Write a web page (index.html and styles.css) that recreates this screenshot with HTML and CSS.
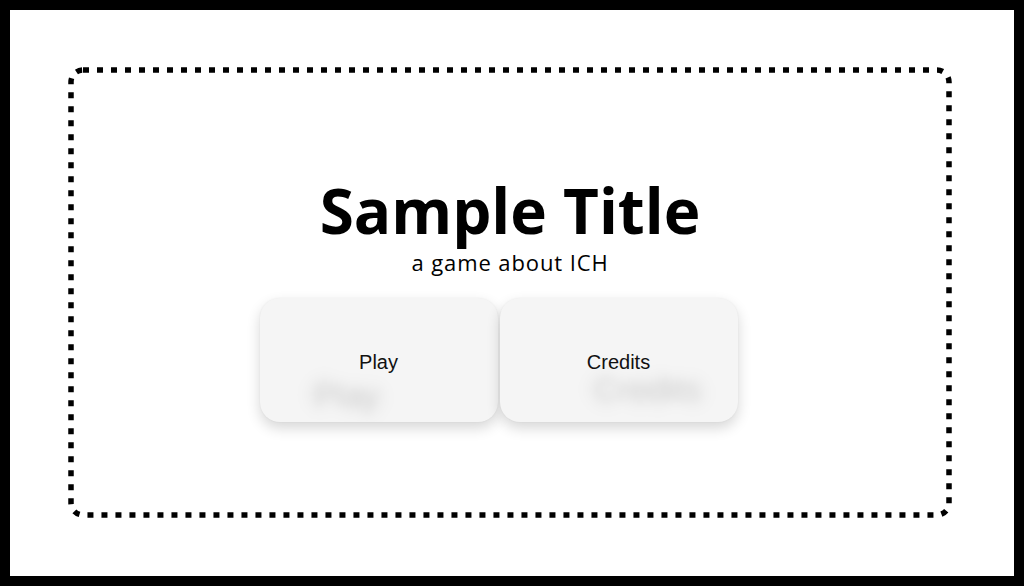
FILE: index.html
```html
<!DOCTYPE html>
<html lang="en">
<head>
  <meta charset="UTF-8" />
  <meta name="viewport" content="width=device-width, initial-scale=1.0"/>
  <title>Sample Title</title>
  <link rel="stylesheet" href="styles.css">
</head>
<body>
  <div class="frame">
    <main class="stage">
      <!-- dotted outline, square dots -->
      <svg class="outline" width="884" height="451" viewBox="0 0 884 451">
        <rect x="3" y="3" width="878" height="445" rx="12" ry="12"
              fill="none" stroke="#000" stroke-width="5.5" stroke-dasharray="6 8"/>
      </svg>
      <h1 class="title">Sample Title</h1>
      <p class="subtitle">a game about ICH</p>
      <div class="menu">
        <button class="menu-btn ghost-left" data-label="Play">Play</button>
        <button class="menu-btn ghost-right" data-label="Credits">Credits</button>
      </div>
    </main>
  </div>
</body>
</html>
```

FILE: styles.css
```css
body {
  margin: 0;
  background: #000;
  padding: 10px;
  font-family: 'Open Sans', Lato, sans-serif;
  color: #000;
}
.frame {
  background: #fff;
  height: 566px;
  box-sizing: border-box;
  padding: 57px 62px 58px 58px;
}
.stage {
  position: relative;
  height: 451px;
  box-sizing: border-box;
  padding-top: 112px;
  display: flex;
  flex-direction: column;
  align-items: center;
}
.outline {
  position: absolute;
  top: 0;
  left: 0;
}
.title {
  margin: 0;
  font-size: 62px;
  line-height: 62px;
  font-weight: 700;
}
.subtitle {
  margin: 9px 0 0;
  font-size: 22px;
  line-height: 24px;
  letter-spacing: 0.9px;
}
.menu {
  display: flex;
  gap: 2px;
  margin: 24px 23px 0 0;
}
.menu-btn {
  position: relative;
  width: 238px;
  height: 124px;
  padding: 4px 0 0;
  border: none;
  border-radius: 20px;
  background: #f5f5f5;
  box-shadow: 0 6px 14px rgba(0,0,0,0.16), 0 0 2px rgba(0,0,0,0.06);
  font-family: 'Liberation Sans', Arial, sans-serif;
  font-size: 20px;
  color: #111;
  cursor: pointer;
  overflow: hidden;
}
/* blurred echo of the label under the text */
.menu-btn::after {
  content: attr(data-label);
  position: absolute;
  top: 50%;
  left: 50%;
  font-size: 34px;
  color: rgba(0,0,0,0.05);
  text-shadow: 0 0 18px rgba(0,0,0,0.22);
  filter: blur(4px);
  white-space: nowrap;
  pointer-events: none;
}
.ghost-left::after {
  transform: translate(calc(-50% - 32px), calc(-50% + 35px));
}
.ghost-right::after {
  transform: translate(calc(-50% + 29px), calc(-50% + 29px));
}
```
